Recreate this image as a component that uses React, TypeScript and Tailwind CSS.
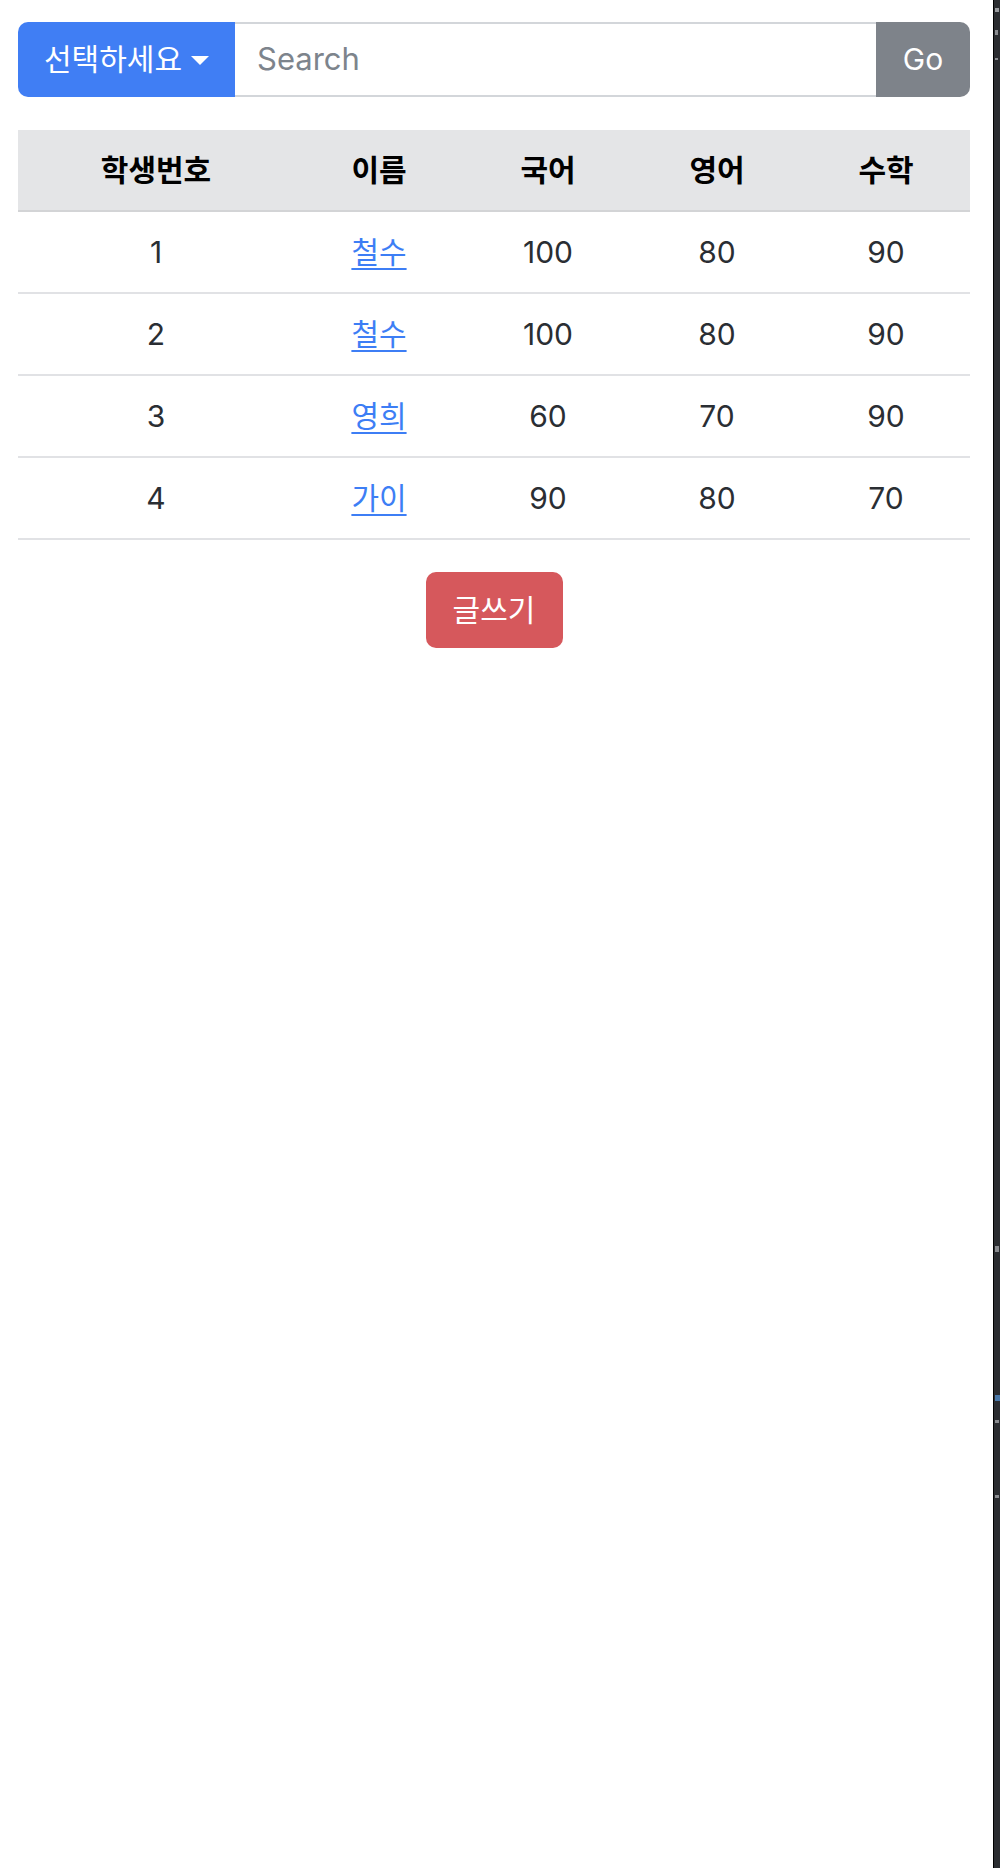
import React from "react";

const rows = [
  { id: 1, name: "철수", kor: 100, eng: 80, math: 90 },
  { id: 2, name: "철수", kor: 100, eng: 80, math: 90 },
  { id: 3, name: "영희", kor: 60, eng: 70, math: 90 },
  { id: 4, name: "가이", kor: 90, eng: 80, math: 70 },
];

const font = { fontFamily: 'Inter, "Noto Sans CJK KR", "Noto Sans", sans-serif' };

export default function App() {
  return (
    <div className="flex min-h-[1868px] w-[1000px] bg-white" style={font}>
      <main className="flex-1 pl-[18px] pr-[23px] pt-[22px]">
        <div className="flex h-[75px] w-[952px]">
          <button className="flex h-full w-[217px] items-center justify-center gap-[9px] rounded-l-[10px] bg-[#407ef4] text-[30px] text-white">
            <span>선택하세요</span>
            <span className="mt-[2px] h-0 w-0 border-x-[9px] border-t-[9px] border-x-transparent border-t-white"></span>
          </button>
          <div className="flex h-full flex-1 items-center border-y-2 border-[#d3d6da] pl-[22px]">
            <span className="text-[31px] text-[#7d848c]">Search</span>
          </div>
          <button className="flex h-full w-[94px] items-center justify-center rounded-r-[10px] bg-[#7e838a] text-[30px] text-white">
            Go
          </button>
        </div>

        <table className="mt-[33px] w-[952px] table-fixed border-separate border-spacing-0 text-center">
          <colgroup>
            <col className="w-[276px]" />
            <col className="w-[170px]" />
            <col className="w-[168px]" />
            <col className="w-[170px]" />
            <col className="w-[168px]" />
          </colgroup>
          <thead>
            <tr className="bg-[#e4e5e7]">
              {["학생번호", "이름", "국어", "영어", "수학"].map((h) => (
                <th
                  key={h}
                  className="h-[82px] border-b-2 border-[#d3d4d6] p-0 align-middle text-[30px] font-bold text-black"
                >
                  {h}
                </th>
              ))}
            </tr>
          </thead>
          <tbody className="text-[30px] text-[#2a2e33]">
            {rows.map((r) => (
              <tr key={r.id}>
                <td className="h-[82px] border-b-2 border-[#e1e2e5] p-0 align-middle">{r.id}</td>
                <td className="h-[82px] border-b-2 border-[#e1e2e5] p-0 align-middle">
                  <a className="text-[#3d7ef5] underline decoration-2 underline-offset-[5px]">{r.name}</a>
                </td>
                <td className="h-[82px] border-b-2 border-[#e1e2e5] p-0 align-middle">{r.kor}</td>
                <td className="h-[82px] border-b-2 border-[#e1e2e5] p-0 align-middle">{r.eng}</td>
                <td className="h-[82px] border-b-2 border-[#e1e2e5] p-0 align-middle">{r.math}</td>
              </tr>
            ))}
          </tbody>
        </table>

        <div className="mt-[32px] flex justify-center">
          <button className="flex h-[76px] w-[137px] items-center justify-center rounded-[10px] bg-[#d6585c] text-[30px] text-white">
            글쓰기
          </button>
        </div>
      </main>
      <div className="relative w-[7px] border-l border-black bg-[#2b2d31]">
        <span className="absolute left-[1px] top-[8px] h-[4px] w-[4px] bg-[#9a9ca0]"></span>
        <span className="absolute left-[1px] top-[30px] h-[5px] w-[3px] bg-[#8a8c90]"></span>
        <span className="absolute left-[1px] top-[58px] h-[2px] w-[3px] bg-[#8a8c90]"></span>
        <span className="absolute left-[1px] top-[1246px] h-[6px] w-[4px] bg-[#8a8c90]"></span>
        <span className="absolute left-[1px] top-[1395px] h-[6px] w-[6px] bg-[#4a78a8]"></span>
        <span className="absolute left-[1px] top-[1420px] h-[3px] w-[4px] bg-[#8a8c90]"></span>
        <span className="absolute left-[1px] top-[1495px] h-[3px] w-[4px] bg-[#8a8c90]"></span>
      </div>
    </div>
  );
}
